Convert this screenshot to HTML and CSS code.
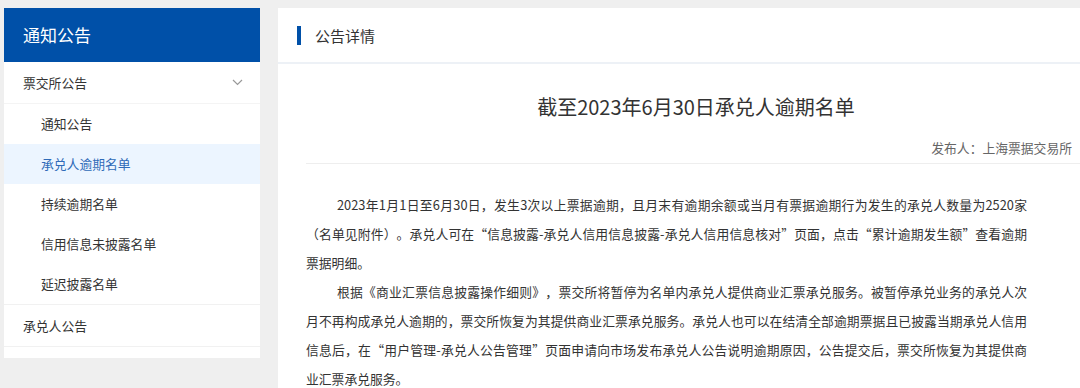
FILE: index.html
```html
<!DOCTYPE html>
<html lang="zh-CN">
<head>
  <meta charset="UTF-8">
  <title>公告详情</title>
  <link rel="stylesheet" href="styles.css">
</head>
<body>

  <div class="page">
    <!-- 左侧菜单 -->
    <aside class="sidebar">
      <div class="sidebar-title">通知公告</div>
      <div class="menu-group">
        <div class="menu-item open">
          <span>票交所公告</span>
          <svg class="chevron" width="11" height="7" viewBox="0 0 11 7"><path d="M1 1l4.5 4.5L10 1" fill="none" stroke="#999" stroke-width="1.2"/></svg>
        </div>
        <ul class="submenu">
          <li>通知公告</li>
          <li class="active">承兑人逾期名单</li>
          <li>持续逾期名单</li>
          <li>信用信息未披露名单</li>
          <li>延迟披露名单</li>
        </ul>
      </div>
      <div class="menu-group">
        <div class="menu-item"><span>承兑人公告</span></div>
      </div>
    </aside>

    <!-- 公告详情 -->
    <main class="detail">
      <div class="detail-head"><span class="bar"></span>公告详情</div>
      <div class="detail-body">
        <h1 class="title">截至2023年6月30日承兑人逾期名单</h1>
        <div class="publisher">发布人：上海票据交易所</div>
        <div class="content">
          <p>2023年1月1日至6月30日，发生3次以上票据逾期，且月末有逾期余额或当月有票据逾期行为发生的承兑人数量为2520家（名单见附件）。承兑人可在“信息披露-承兑人信用信息披露-承兑人信用信息核对”页面，点击“累计逾期发生额”查看逾期票据明细。</p>
          <p>根据《商业汇票信息披露操作细则》，票交所将暂停为名单内承兑人提供商业汇票承兑服务。被暂停承兑业务的承兑人次月不再构成承兑人逾期的，票交所恢复为其提供商业汇票承兑服务。承兑人也可以在结清全部逾期票据且已披露当期承兑人信用信息后，在“用户管理-承兑人公告管理”页面申请向市场发布承兑人公告说明逾期原因，公告提交后，票交所恢复为其提供商业汇票承兑服务。</p>
        </div>
      </div>
    </main>
  </div>

</body>
</html>
```

FILE: styles.css
```css
html, body { overflow: hidden; }
body {
  margin: 0;
  background: #efefef;
  font-family: "Microsoft YaHei", "Noto Sans CJK SC", sans-serif;
  font-size: 12.8px;
  color: #333;
  text-spacing-trim: space-all;
}
.page {
  display: flex;
  align-items: flex-start;
  gap: 18px;
  width: 1110px;
  padding: 8px 0 0 4px;
}

/* sidebar */
.sidebar {
  width: 256px;
  flex-shrink: 0;
  background: #fff;
  padding-bottom: 11px;
}
.sidebar-title {
  height: 54px;
  line-height: 54px;
  padding-left: 19px;
  background: #0050a8;
  color: #fff;
  font-size: 17px;
}
.menu-group { border-bottom: 1px solid #f1f1f1; }
.menu-item {
  display: flex;
  justify-content: space-between;
  align-items: center;
  height: 41px;
  padding: 0 17px 0 19px;
}
.menu-item.open { border-bottom: 1px solid #f4f4f4; }
.submenu {
  list-style: none;
  margin: 0;
  padding: 0;
}
.submenu li {
  height: 40px;
  line-height: 40px;
  padding-left: 37px;
}
.submenu li.active {
  background: #ecf5ff;
  color: #2f6bb8;
}

/* detail panel */
.detail {
  flex: 1;
  background: #fff;
  min-height: 400px;
}
.detail-head {
  display: flex;
  align-items: center;
  height: 54px;
  padding-left: 19px;
  border-bottom: 2px solid #edf1f6;
  font-size: 15px;
}
.detail-head .bar {
  width: 4px;
  height: 19px;
  background: #0050a8;
  margin-right: 14px;
}
.detail-body { padding: 0 28px; }
.title {
  margin: 0;
  padding-top: 28px;
  line-height: 30px;
  font-size: 20px;
  font-weight: normal;
  text-align: center;
  color: #333;
}
.publisher {
  margin-top: 16px;
  line-height: 20px;
  padding: 0 14px 5px 0;
  text-align: right;
  color: #666;
  border-bottom: 1px solid #eee;
}
.content {
  padding: 26px 59px 0 0;
  line-height: 29px;
}
.content p {
  margin: 0;
  text-indent: 31px;
  text-align: justify;
}
```
